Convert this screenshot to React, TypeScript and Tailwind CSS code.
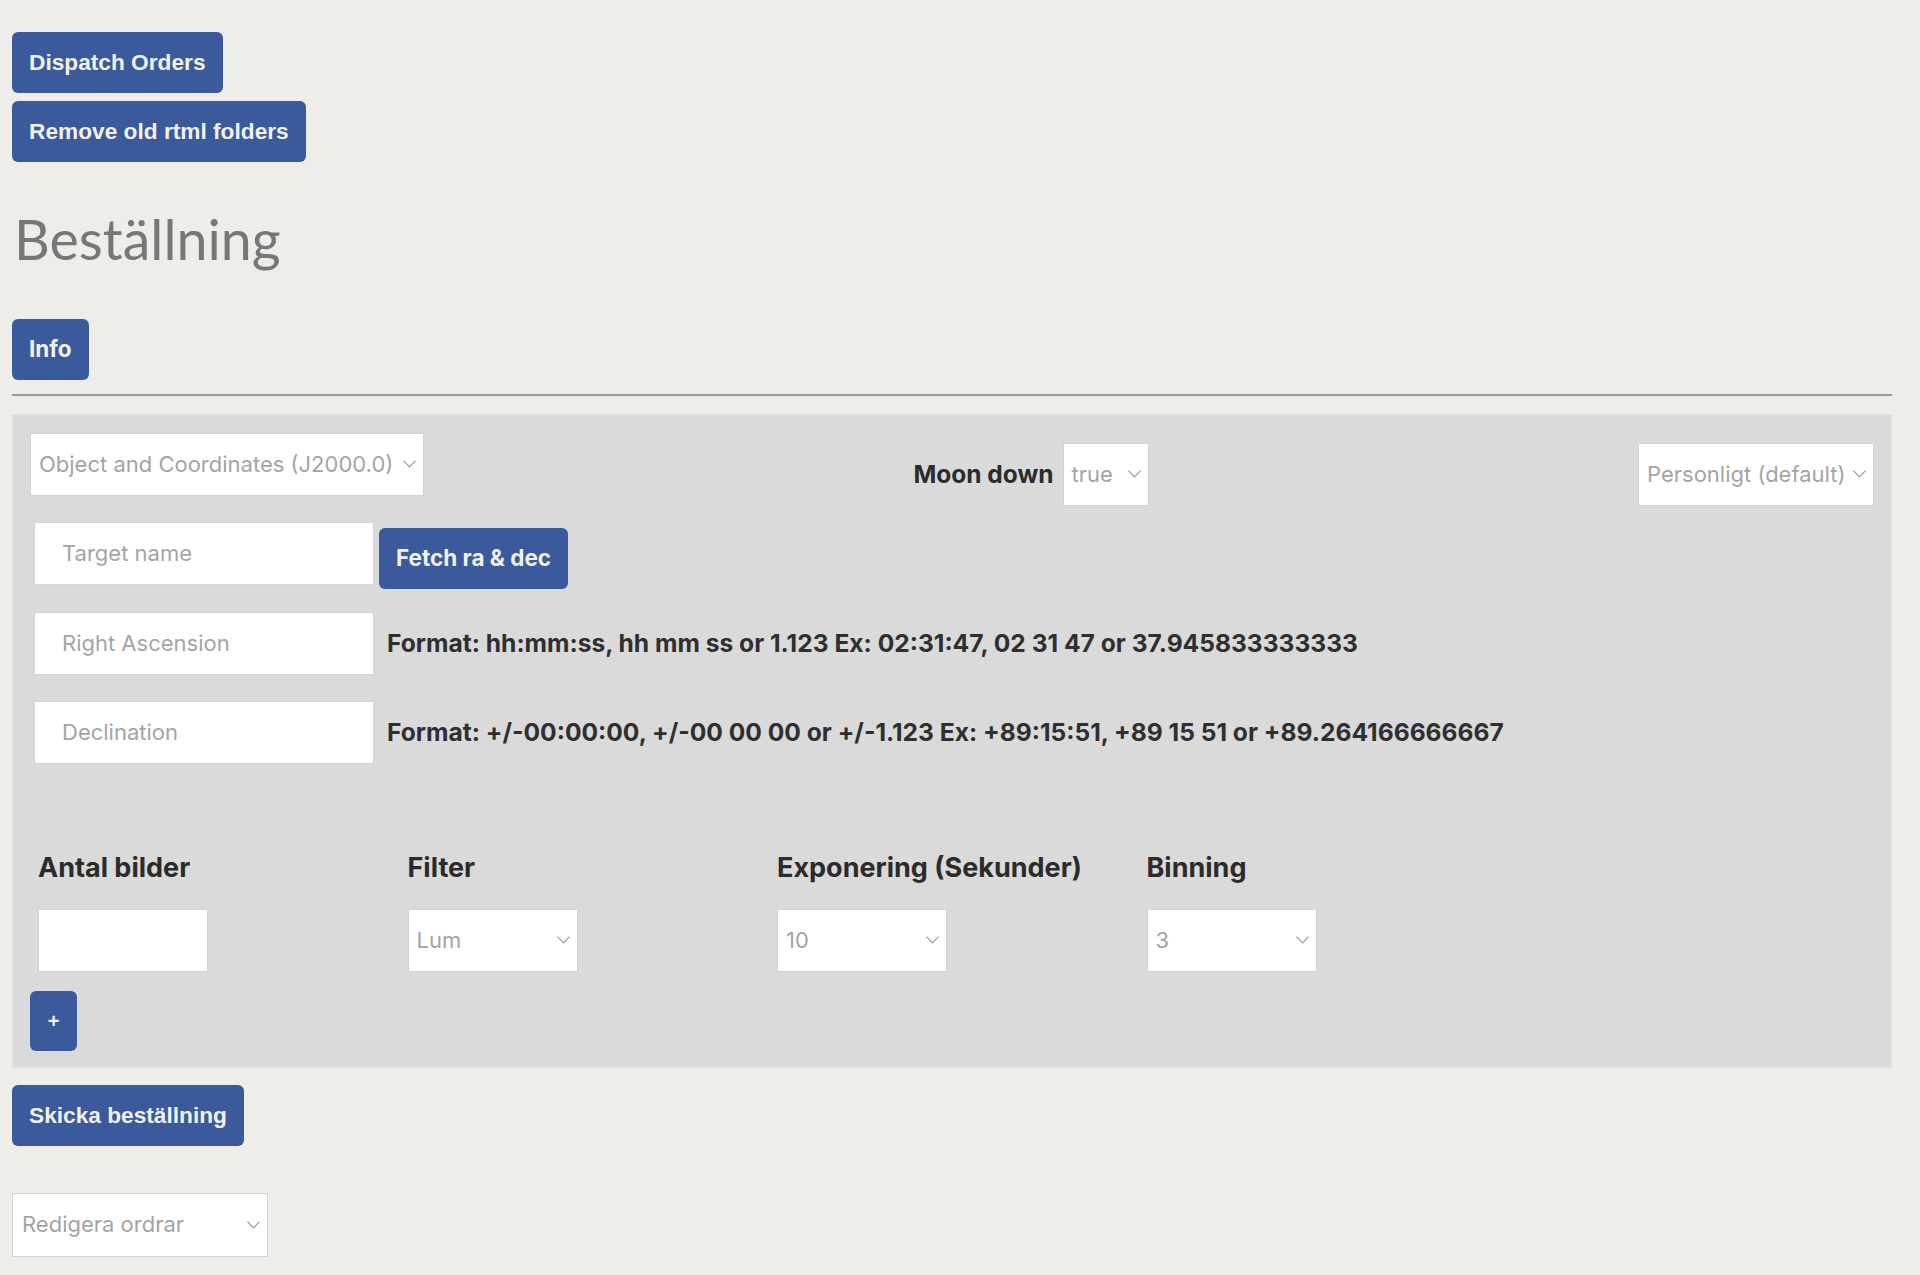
import React from 'react';

const arial = { fontFamily: '"Liberation Sans", Arial, sans-serif' };

function Chevron() {
  return (
    <svg width="13" height="8" viewBox="0 0 13 8" className="shrink-0">
      <polyline points="0.5,0.7 6.5,7 12.5,0.7" fill="none" stroke="#9a9a9a" strokeWidth="1.2" />
    </svg>
  );
}

function FakeSelect({ label, className = '' }: { label: string; className?: string }) {
  return (
    <div
      className={`h-[63px] bg-white border border-[#d2d2d2] flex items-center justify-between pl-[8px] pr-[7px] text-[22px] text-[#a4a4a4] ${className}`}
    >
      <span className="whitespace-nowrap">{label}</span>
      <Chevron />
    </div>
  );
}

function BlueButton({ children, font = 'arial', className = '' }: { children: React.ReactNode; font?: 'arial' | 'inter'; className?: string }) {
  return (
    <button
      className={`bg-[#3a5a9b] text-[#f1f1f1] rounded-[6px] px-[17px] h-[61px] font-bold whitespace-nowrap ${font === 'arial' ? 'text-[22.7px]' : 'text-[22.5px]'} ${className}`}
      style={font === 'arial' ? arial : undefined}
    >
      {children}
    </button>
  );
}

export default function App() {
  return (
    <div className="min-h-screen w-full bg-[#eeede9] font-['Inter',sans-serif]">
      <div className="w-[1880px] ml-[12px] pt-[32px] pb-[18px] flex flex-col items-start">
        {/* Admin actions */}
        <BlueButton>Dispatch Orders</BlueButton>
        <BlueButton className="mt-[8px]">Remove old rtml folders</BlueButton>

        <h1 className="mt-[49px] ml-[2px] text-[55.5px] leading-none text-[#777777] font-['Lato',sans-serif]">Beställning</h1>

        <BlueButton font="inter" className="mt-[52px]">Info</BlueButton>

        <div className="mt-[14px] w-full h-[2px] bg-[#9a9a9a]" />

        {/* Order panel */}
        <div className="mt-[18px] w-full bg-[#dadada] border border-[#e2e2e2] pt-[18px] pb-[16px] pl-[17px] pr-[17px]">
          <div className="flex justify-between items-start">
            <FakeSelect label="Object and Coordinates (J2000.0)" className="w-[394px] h-[62px]" />
            <div className="mt-[10px] flex items-center gap-[9px]">
              <span className="text-[24.5px] font-bold text-[#2b2b2b]">Moon down</span>
              <FakeSelect label="true" className="w-[86px]" />
            </div>
            <FakeSelect label="Personligt (default)" className="mt-[10px] w-[236px]" />
          </div>

          <div className="ml-[4px] mt-[16px] flex items-start">
            <input
              placeholder="Target name"
              className="w-[340px] h-[63px] bg-white border border-[#d4d4d4] pl-[27px] text-[22px] placeholder:text-[#a4a4a4] outline-none"
            />
            <BlueButton font="inter" className="ml-[5px] mt-[6px] h-[60px]">Fetch ra &amp; dec</BlueButton>
          </div>

          <div className="ml-[4px] mt-[23px] flex items-center">
            <input
              placeholder="Right Ascension"
              className="w-[340px] h-[63px] bg-white border border-[#d4d4d4] pl-[27px] text-[22px] placeholder:text-[#a4a4a4] outline-none"
            />
            <span className="ml-[13px] text-[24.6px] font-bold text-[#2f2f2f] whitespace-nowrap">
              Format: hh:mm:ss, hh mm ss or 1.123 Ex: 02:31:47, 02 31 47 or 37.945833333333
            </span>
          </div>

          <div className="ml-[4px] mt-[26px] flex items-center">
            <input
              placeholder="Declination"
              className="w-[340px] h-[63px] bg-white border border-[#d4d4d4] pl-[27px] text-[22px] placeholder:text-[#a4a4a4] outline-none"
            />
            <span className="ml-[13px] text-[24.6px] font-bold text-[#2f2f2f] whitespace-nowrap">
              Format: +/-00:00:00, +/-00 00 00 or +/-1.123 Ex: +89:15:51, +89 15 51 or +89.264166666667
            </span>
          </div>

          <div className="ml-[8px] mt-[88px] grid grid-cols-[repeat(4,369.5px)]">
            <div className="flex flex-col items-start">
              <span className="text-[27px] leading-[1.2] font-bold text-[#2b2b2b]">Antal bilder</span>
              <input className="mt-[25px] w-[170px] h-[63px] bg-white border border-[#d4d4d4] px-[8px] text-[22px] outline-none" />
            </div>
            <div className="flex flex-col items-start">
              <span className="text-[27px] leading-[1.2] font-bold text-[#2b2b2b]">Filter</span>
              <FakeSelect label="Lum" className="mt-[25px] w-[170px]" />
            </div>
            <div className="flex flex-col items-start">
              <span className="text-[27px] leading-[1.2] font-bold text-[#2b2b2b]">Exponering (Sekunder)</span>
              <FakeSelect label="10" className="mt-[25px] w-[170px]" />
            </div>
            <div className="flex flex-col items-start">
              <span className="text-[27px] leading-[1.2] font-bold text-[#2b2b2b]">Binning</span>
              <FakeSelect label="3" className="mt-[25px] w-[170px]" />
            </div>
          </div>

          <button
            className="mt-[19px] w-[47px] h-[60px] rounded-[6px] bg-[#3a5a9b] text-[#f1f1f1] text-[20px] font-bold flex items-center justify-center"
            style={arial}
          >
            +
          </button>
        </div>

        <BlueButton className="mt-[17px]">Skicka beställning</BlueButton>

        <FakeSelect label="Redigera ordrar" className="mt-[47px] w-[256px] h-[64px] pl-[9px]" />
      </div>
    </div>
  );
}
